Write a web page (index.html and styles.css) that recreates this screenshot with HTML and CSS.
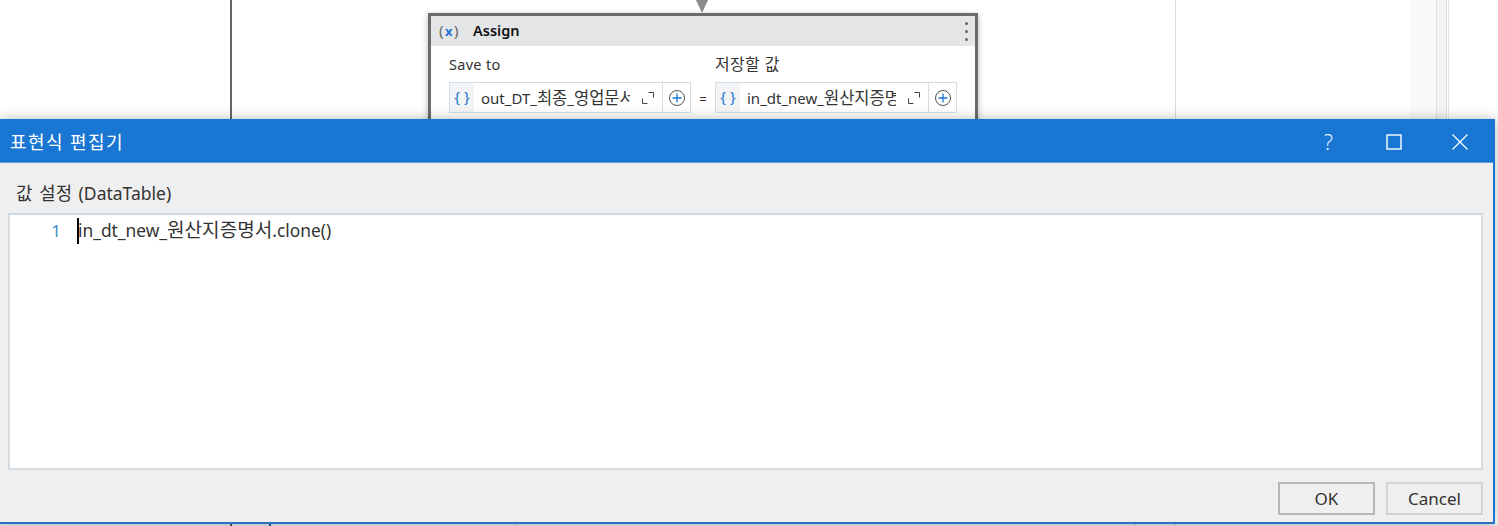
FILE: index.html
```html
<!DOCTYPE html>
<html lang="ko">
<head>
<meta charset="utf-8">
<title>표현식 편집기</title>
<link rel="stylesheet" href="styles.css">
</head>
<body>
<div class="stage">
  <div class="rule rule-seq"></div>
  <div class="rule rule-panel"></div>
  <div class="scroll-track"></div>
  <div class="rule rule-side1"></div>
  <div class="rule rule-side2"></div>
  <div class="arrow"></div>

  <section class="card">
    <header class="card-head">
      <span class="card-icon">(<b>x</b>)</span>
      <span class="card-title">Assign</span>
      <span class="kebab"><i></i><i></i><i></i></span>
    </header>
    <div class="card-body">
      <div class="field-col">
        <label class="field-label">Save to</label>
        <div class="field">
          <span class="brace">{ }</span>
          <span class="field-text">out_DT_<span class="ko">최종</span>_<span class="ko">영업문서</span></span>
          <svg class="expand" width="14" height="14" viewBox="0 0 14 14"><path d="M1.5 7.5v5h5M7.5 1.5h5v5" fill="none" stroke="#444" stroke-width="1"/></svg>
          <span class="plus-box"><svg width="18" height="18" viewBox="0 0 18 18"><circle cx="9" cy="9" r="7.5" fill="none" stroke="#555" stroke-width="1"/><path d="M9 4.5v9M4.5 9h9" stroke="#1f76cf" stroke-width="1.3"/></svg></span>
        </div>
      </div>
      <span class="equals">=</span>
      <div class="field-col">
        <label class="field-label"><span class="ko">저장할 값</span></label>
        <div class="field">
          <span class="brace">{ }</span>
          <span class="field-text">in_dt_new_<span class="ko">원산지증명서</span></span>
          <svg class="expand" width="14" height="14" viewBox="0 0 14 14"><path d="M1.5 7.5v5h5M7.5 1.5h5v5" fill="none" stroke="#444" stroke-width="1"/></svg>
          <span class="plus-box"><svg width="18" height="18" viewBox="0 0 18 18"><circle cx="9" cy="9" r="7.5" fill="none" stroke="#555" stroke-width="1"/><path d="M9 4.5v9M4.5 9h9" stroke="#1f76cf" stroke-width="1.3"/></svg></span>
        </div>
      </div>
    </div>
  </section>

  <div class="strip">
    <i class="tick tick-dark"></i><i class="tick tick-blue"></i><i class="tick tick-a"></i><i class="tick tick-b"></i><i class="tick tick-c"></i>
  </div>

  <section class="dialog">
    <header class="title-bar">
      <h1 class="title">표현식 편집기</h1>
      <div class="win-buttons">
        <span class="win-help">?</span>
        <svg class="win-icon" width="16" height="16" viewBox="0 0 16 16"><rect x="1" y="1" width="14" height="14" fill="none" stroke="#fff" stroke-width="1.4"/></svg>
        <svg class="win-icon" width="18" height="18" viewBox="0 0 18 18"><path d="M1.5 1.5l15 15M16.5 1.5l-15 15" stroke="#fff" stroke-width="1.2"/></svg>
      </div>
    </header>
    <div class="dialog-body">
      <div class="value-label"><span class="ko">값 설정</span> (DataTable)</div>
      <div class="editor">
        <div class="code-line">
          <span class="line-no">1</span>
          <span class="code"><i class="caret"></i>in_dt_new_<span class="ko">원산지증명서</span>.clone()</span>
        </div>
      </div>
      <footer class="actions">
        <button class="btn btn-default">OK</button>
        <button class="btn">Cancel</button>
      </footer>
    </div>
  </section>
</div>
</body>
</html>
```
FILE: styles.css
```css
* { box-sizing: border-box; }
html, body { margin: 0; padding: 0; background: #fff; }
.stage {
  position: relative;
  width: 1498px;
  height: 526px;
  overflow: hidden;
  background: #fff;
  font-family: "Noto Sans", "Noto Sans CJK KR", sans-serif;
  color: #222;
}
.ko { font-size: 1.1em; line-height: 1; font-family: "Noto Sans CJK KR", sans-serif; }
.rule { position: absolute; top: 0; height: 120px; width: 1px; }
.rule-seq { left: 230px; width: 2px; background: #666; }
.rule-panel { left: 1175px; background: #d3dade; }
.scroll-track { position: absolute; top: 0; left: 1410px; width: 26px; height: 120px; background: #fafafa; }
.rule-side1 { left: 1436px; width: 11px; background: #f3f4f4; border-left: 1px solid #dfe1e1; border-right: 1px solid #dfe1e1; }
.rule-side2 { left: 1448px; background: #e3e5e5; }
.arrow {
  position: absolute;
  left: 696px;
  top: 0;
  border-left: 6px solid transparent;
  border-right: 6px solid transparent;
  border-top: 13px solid #8c8c8c;
}
.card {
  position: absolute;
  left: 428px;
  top: 13px;
  width: 550px;
  height: 120px;
  border: 3px solid #6c6c6c;
  background: #fff;
  box-shadow: 0 2px 6px rgba(0,0,0,.3);
}
.card-head {
  display: flex;
  align-items: center;
  height: 30px;
  padding: 0 8px 2px;
  background: #e4e5e7;
}
.card-icon { width: 34px; font-size: 15px; color: #666; letter-spacing: 1.5px; font-family: "Noto Sans", sans-serif; }
.card-icon b { color: #1f76cf; font-weight: 700; font-size: 13px; }
.card-title { flex: 1; font-size: 14.5px; font-weight: 600; color: #111; }
.kebab { display: flex; flex-direction: column; gap: 5px; margin: 2px -1px 0 0; }
.kebab i { width: 3px; height: 3px; border-radius: 50%; background: #666; }
.card-body { display: flex; align-items: flex-end; padding: 8px 0 0 18px; }
.field-col { display: flex; flex-direction: column; }
.field-label { font-size: 14.5px; line-height: 20px; color: #333; margin-bottom: 8px; letter-spacing: .3px; }
.field {
  display: flex;
  align-items: center;
  width: 242px;
  height: 31px;
  border: 1px solid #d4dde3;
  background: #fff;
}
.brace {
  flex: none;
  width: 24px;
  height: 100%;
  background: #f2f4f6;
  color: #1f76cf;
  font-size: 15px;
  line-height: 27px;
  text-align: center;
  white-space: pre;
}
.field-text {
  flex: none;
  width: 156px;
  padding-left: 7px;
  font-size: 15px;
  line-height: 20px;
  overflow: hidden;
  white-space: nowrap;
  color: #333;
}
.expand { flex: none; margin: 0 7px 0 11px; }
.plus-box {
  flex: none;
  display: flex;
  align-items: center;
  justify-content: center;
  width: 28px;
  height: 100%;
  border-left: 1px solid #d4dde3;
}
.equals { width: 24px; text-align: center; font-size: 13px; line-height: 28px; color: #333; }
.strip { position: absolute; left: 0; right: 0; top: 524px; height: 2px; background: #e8e8e8; }
.tick { position: absolute; top: 0; width: 2px; height: 2px; }
.tick-dark { left: 230px; background: #555; }
.tick-blue { left: 269px; background: #1a5ea8; }
.tick-a { left: 516px; width: 1px; background: #ccc; }
.tick-b { left: 1135px; width: 1px; background: #ccc; }
.tick-c { left: 1175px; width: 1px; background: #ccc; }
.dialog {
  position: absolute;
  left: 0;
  top: 119px;
  width: 1495px;
  height: 405px;
  display: flex;
  flex-direction: column;
  border-top: 1px solid #1976d2;
  border-right: 2px solid #1976d2;
  border-bottom: 2px solid #2a72c0;
  background: #efefef;
  box-shadow: 0 0 12px rgba(0,0,0,.28);
}
.title-bar {
  flex: none;
  display: flex;
  align-items: center;
  justify-content: space-between;
  height: 43px;
  padding: 0 24px 0 10px;
  background: #1976d3;
  border-top: 1px solid #1976d3;
  border-bottom: 1px solid #5a9ee0;
  color: #fff;
}
.title { margin: 0; font-size: 18px; font-weight: 400; line-height: 22px; letter-spacing: 1.4px; }
.win-buttons { display: flex; align-items: center; gap: 49px; }
.win-help { font-size: 21px; font-weight: 300; line-height: 22px; width: 12px; color: #e6f0fb; margin-right: 2px; position: relative; left: 1px; }
.win-icon { display: block; }
.dialog-body { flex: 1; display: flex; flex-direction: column; padding: 0 10px 0 8px; min-height: 0; }
.value-label { height: 50px; padding: 20px 0 0 8px; font-size: 17.5px; line-height: 20px; color: #333; white-space: nowrap; word-spacing: 2px; }
.value-label .ko { font-size: 17.8px; }
.editor {
  flex: none;
  height: 257px;
  background: #fff;
  border: 2px solid #d5dde2;
  border-top-color: #cfd9df;
  padding-top: 3px;
}
.code-line { display: flex; align-items: center; height: 24px; }
.line-no { width: 51px; text-align: right; color: #3f8fbf; font-size: 17px; }
.code { position: relative; margin-left: 17px; font-size: 17.35px; line-height: 22px; color: #333; white-space: nowrap; }
.caret { position: absolute; left: -1px; top: -1px; width: 2px; height: 26px; background: #000; }
.actions { flex: 1; display: flex; justify-content: flex-end; align-items: flex-start; gap: 11px; padding: 12px 0 0 0; }
.btn {
  width: 97px;
  height: 33px;
  padding: 0;
  border: 2px solid #d4d4d4;
  background: #efefef;
  font: inherit;
  font-size: 17px;
  color: #333;
}
.btn-default { border-color: #b6b6b6; }
```
